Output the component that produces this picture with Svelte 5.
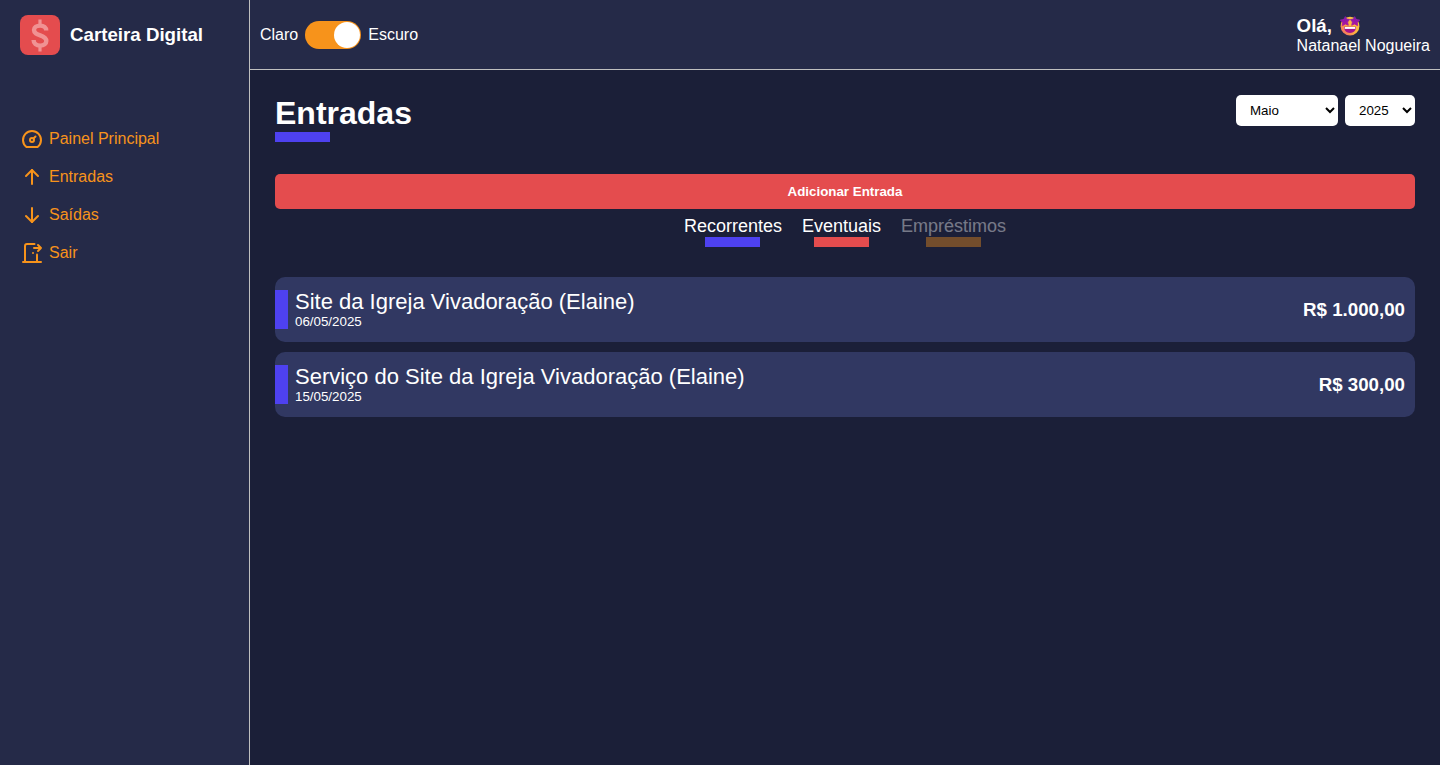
<script>
  const menu = [
    { label: 'Painel Principal', paths: ['M10 13a2 2 0 1 0 4 0a2 2 0 1 0-4 0', 'M13.45 11.55l2.05-2.05', 'M6.4 20a9 9 0 1 1 11.2 0z'] },
    { label: 'Entradas', paths: ['M12 5v14', 'M18 11l-6-6', 'M6 11l6-6'] },
    { label: 'Saídas', paths: ['M12 5v14', 'M18 13l-6 6', 'M6 13l6 6'] },
    { label: 'Sair', paths: ['M13 12v.01', 'M3 21h18', 'M5 21V5a2 2 0 0 1 2-2h7.5', 'M17 13.5V21', 'M14 7h7m-3-3l3 3l-3 3'] }
  ];
  const months = ['Janeiro', 'Fevereiro', 'Março', 'Abril', 'Maio', 'Junho', 'Julho', 'Agosto', 'Setembro', 'Outubro', 'Novembro', 'Dezembro'];
  const years = [2023, 2024, 2025];
  const entries = [
    { title: 'Site da Igreja Vivadoração (Elaine)', date: '06/05/2025', amount: 'R$ 1.000,00' },
    { title: 'Serviço do Site da Igreja Vivadoração (Elaine)', date: '15/05/2025', amount: 'R$ 300,00' }
  ];

  let dark = $state(true);
  let month = $state('Maio');
  let year = $state(2025);
  let tabs = $state([
    { label: 'Recorrentes', tone: 'info', on: true },
    { label: 'Eventuais', tone: 'danger', on: true },
    { label: 'Empréstimos', tone: 'warning', on: false }
  ]);
</script>

<div class="layout">
  <aside>
    <div class="brand">
      <svg class="logo" viewBox="0 0 40 40" aria-hidden="true">
        <rect width="40" height="40" rx="8" fill="#e44c4e" />
        <path d="M20 4.500v5M20 31.500v5" stroke="#f09293" stroke-width="3.200" />
        <path d="M26.200 15.500C26.200 12.500 23.800 10.600 20.200 10.600C16.500 10.600 14 12.300 14 15C14 18.200 16.800 19.200 20.200 20.400C23.800 21.700 26.300 22.900 26.300 26C26.300 28.800 23.900 30.600 20.200 30.600C16.200 30.600 13.600 28.600 13.600 25" fill="none" stroke="#f09293" stroke-width="4.400" />
      </svg>
      <h3>Carteira Digital</h3>
    </div>
    <nav>
      {#each menu as item}
        <a href="#top">
          <svg viewBox="0 0 24 24" aria-hidden="true">
            {#each item.paths as d}<path {d} />{/each}
          </svg>
          {item.label}
        </a>
      {/each}
    </nav>
  </aside>

  <div class="column">
    <header>
      <label class="theme">
        <span>Claro</span>
        <input type="checkbox" role="switch" bind:checked={dark} />
        <span>Escuro</span>
      </label>
      <div class="profile">
        <h3>
          Olá,
          <svg class="emoji" viewBox="0 0 20 20" aria-hidden="true">
            <defs>
              <linearGradient id="face" x1="1" y1="0" x2="0" y2="1">
                <stop offset="0" stop-color="#ffd23f" />
                <stop offset=".55" stop-color="#fdb040" />
                <stop offset="1" stop-color="#ef5a70" />
              </linearGradient>
              <linearGradient id="star" x1="0" y1="0" x2="0" y2="1">
                <stop offset="0" stop-color="#7d1cae" />
                <stop offset="1" stop-color="#b3149f" />
              </linearGradient>
            </defs>
            <circle cx="10" cy="10.200" r="9.400" fill="url(#face)" />
            <path d="M5.300 .6l1.300 2.500 3 .4-2 2.500.7 3.300-3-1.300L2.400 9.800l.2-3.300L.3 4l3.400-.5z" fill="url(#star)" stroke="url(#star)" stroke-width=".8" stroke-linejoin="round" />
            <path d="M14.700 .6l-1.300 2.500-3 .4 2 2.500-.7 3.300 3-1.300 2.900 1.800-.2-3.300L19.700 4l-3.400-.5z" fill="url(#star)" stroke="url(#star)" stroke-width=".8" stroke-linejoin="round" />
            <path d="M4 10.800h12c0 3.800-2.400 6.200-6 6.200s-6-2.400-6-6.200z" fill="#a5128a" />
            <path d="M4.700 11h10.600v1.900H4.700z" fill="#fff" />
          </svg>
        </h3>
        <span>Natanael Nogueira</span>
      </div>
    </header>

    <main>
      <div class="heading">
        <h1>Entradas</h1>
        <div class="selectors">
          <select aria-label="Mês" bind:value={month}>
            {#each months as m}<option>{m}</option>{/each}
          </select>
          <select aria-label="Ano" bind:value={year}>
            {#each years as y}<option value={y}>{y}</option>{/each}
          </select>
        </div>
      </div>

      <button type="button" class="add">Adicionar Entrada</button>

      <div class="tabs">
        {#each tabs as tab}
          <button type="button" class={tab.tone} class:off={!tab.on} aria-pressed={tab.on} onclick={() => (tab.on = !tab.on)}>
            {tab.label}
          </button>
        {/each}
      </div>

      <ul>
        {#each entries as entry}
          <li>
            <i class="tag"></i>
            <div class="info">
              <span>{entry.title}</span>
              <small>{entry.date}</small>
            </div>
            <h3>{entry.amount}</h3>
          </li>
        {/each}
      </ul>
    </main>
  </div>
</div>

<style>
  :global(body) {
    background: #1b1f38;
    color: #fff;
    font-family: Arial, 'Liberation Sans', sans-serif;
  }
  :global(*) { box-sizing: border-box; }
  h1, h3, ul { margin: 0; padding: 0; }
  button, select { font-family: inherit; border: 0; cursor: pointer; }

  .layout {
    display: grid;
    grid-template-columns: 250px 1fr;
    min-height: 100vh;
  }
  aside {
    background: #252a48;
    border-right: 1px solid #bfbfbf;
    padding-left: 20px;
  }
  .brand {
    display: flex;
    align-items: center;
    gap: 10px;
    height: 70px;
  }
  .logo { width: 40px; height: 40px; }
  nav {
    display: flex;
    flex-direction: column;
    gap: 14px;
    margin-top: 57px;
  }
  nav a {
    display: flex;
    align-items: center;
    gap: 5px;
    line-height: 24px;
    color: #f7931b;
    text-decoration: none;
  }
  nav svg {
    width: 24px;
    height: 24px;
    fill: none;
    stroke: currentColor;
    stroke-width: 2;
    stroke-linecap: round;
    stroke-linejoin: round;
  }

  header {
    display: flex;
    align-items: center;
    justify-content: space-between;
    height: 70px;
    padding: 0 10px;
    background: #252a48;
    border-bottom: 1px solid #bfbfbf;
  }
  .theme {
    display: flex;
    align-items: center;
    gap: 7px;
    cursor: pointer;
  }
  .theme input {
    appearance: none;
    display: flex;
    align-items: center;
    width: 56px;
    height: 28px;
    margin: 0;
    padding: 0 1px;
    border-radius: 14px;
    background: #f7931b;
    cursor: pointer;
  }
  .theme input::before {
    content: '';
    width: 26px;
    height: 26px;
    border-radius: 50%;
    background: #fff;
  }
  .theme input:checked { justify-content: flex-end; }
  .profile { line-height: 18px; }
  .profile h3 {
    display: flex;
    align-items: center;
    gap: 8px;
    line-height: 22px;
  }
  .emoji { width: 20px; height: 20px; }

  main { padding: 25px; }
  .heading {
    display: flex;
    align-items: flex-start;
    justify-content: space-between;
    margin-bottom: 32px;
  }
  h1 { font-size: 32px; line-height: 37px; }
  h1::after {
    content: '';
    display: block;
    width: 55px;
    height: 10px;
    background: #4e41f0;
  }
  .selectors { display: flex; gap: 7px; }
  select {
    padding: 7px 10px;
    border-radius: 5px;
    background: #fff;
    color: #000;
  }
  .add {
    display: block;
    width: 100%;
    padding: 10px;
    border-radius: 5px;
    background: #e44c4e;
    color: #fff;
    font-weight: bold;
  }
  .tabs {
    display: flex;
    justify-content: center;
    margin: 7px 0 30px;
  }
  .tabs button {
    padding: 0 10px;
    background: none;
    color: #fff;
    font-size: 18px;
    line-height: 21px;
  }
  .tabs button::after {
    content: '';
    display: block;
    width: 55px;
    height: 10px;
    margin: 0 auto;
    background: var(--tone);
  }
  .tabs .info { --tone: #4e41f0; }
  .tabs .danger { --tone: #e44c4e; }
  .tabs .warning { --tone: #f7931b; }
  .tabs .off { opacity: 0.4; }

  ul {
    display: flex;
    flex-direction: column;
    gap: 10px;
    list-style: none;
  }
  li {
    display: flex;
    align-items: center;
    padding: 12px 10px 12px 0;
    border-radius: 10px;
    background: #313862;
  }
  .tag {
    width: 13px;
    height: 39px;
    margin-right: 7px;
    background: #4e41f0;
  }
  .info {
    display: flex;
    flex: 1;
    flex-direction: column;
  }
  .tabs .info { display: block; flex: none; }
  .info span { font-size: 22px; line-height: 25px; }
  .info small { line-height: 16px; }
</style>
